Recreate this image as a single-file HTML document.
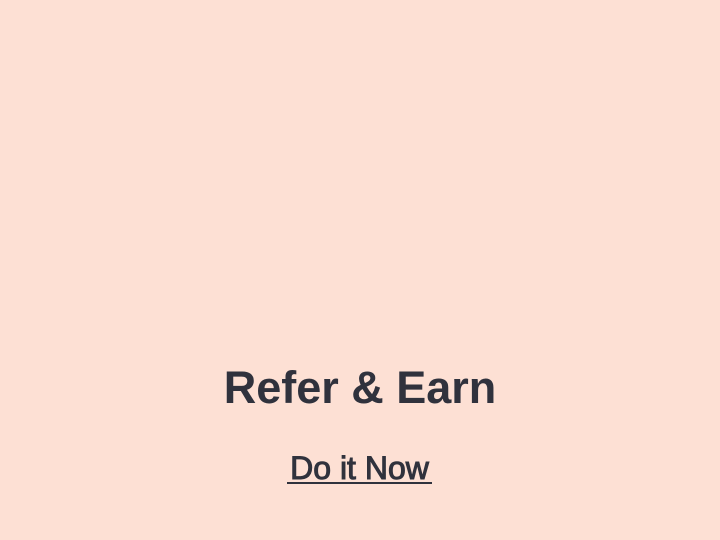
<!DOCTYPE html>
<html><head><style>
html,body{margin:0;padding:0}
body{width:720px;height:540px;background:#fde0d4;position:relative;overflow:hidden;font-family:"Liberation Sans",sans-serif;color:#30323d}
.h{position:absolute;left:0;width:720px;text-align:center;top:360px;font-size:45px;font-weight:bold;line-height:56px;letter-spacing:0px}
.l{position:absolute;left:287px;width:145px;text-align:center;top:449px;font-size:32px;line-height:38px;-webkit-text-stroke:1px #30323d;white-space:nowrap}
.u{position:absolute;left:287px;width:145px;top:482px;height:2px;background:#30323d}
</style></head><body>
<div class="h">Refer &amp; Earn</div>
<div class="l">Do it Now</div>
<div class="u"></div>
</body></html>
